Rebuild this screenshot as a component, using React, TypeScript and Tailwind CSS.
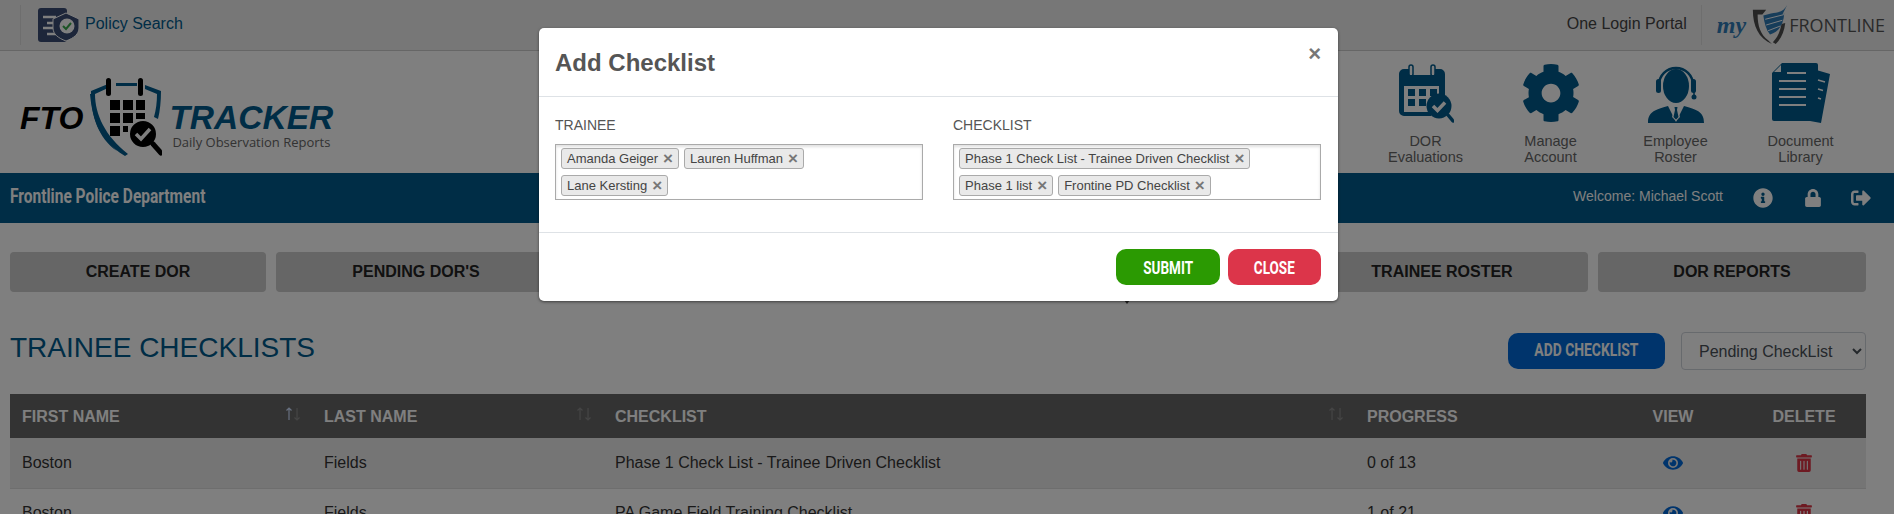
import { FaCog, FaEye, FaInfoCircle, FaLock, FaSignOutAlt, FaTrashAlt } from 'react-icons/fa';

const arial = { fontFamily: '"Liberation Sans", Arial, sans-serif' };

// the two middle buttons sit behind the modal, their labels can't be read
const navButtons = ['CREATE DOR', "PENDING DOR'S", '', '', 'TRAINEE ROSTER', 'DOR REPORTS'];

const rows = [
    { first: 'Boston', last: 'Fields', checklist: 'Phase 1 Check List - Trainee Driven Checklist', progress: '0 of 13' },
    { first: 'Boston', last: 'Fields', checklist: 'PA Game Field Training Checklist', progress: '1 of 21' },
];

function CalendarIcon() {
    return (
        <svg viewBox="0 0 56 60" className="h-[60px] w-[56px]" fill="#005a8c">
            <path d="M5 5h5v6h26V5h5a5 5 0 0 1 5 5v31h-6V22H5v26h27v4H5a5 5 0 0 1-5-5V10a5 5 0 0 1 5-5z" transform="translate(1 1)" />
            <rect x="11" y="2" width="4" height="11" rx="2" fill="none" stroke="#005a8c" strokeWidth="1.5" />
            <rect x="33" y="2" width="4" height="11" rx="2" fill="none" stroke="#005a8c" strokeWidth="1.5" />
            <path d="M10 26h7v7h-7zM21 26h7v7h-7zM32 26h7v7h-7zM10 36h7v7h-7zM21 36h7v7h-7z" />
            <circle cx="41" cy="43" r="12.5" />
            <path d="M50 52l5 6" stroke="#005a8c" strokeWidth="3.5" strokeLinecap="round" />
            <path d="M35 43l4.5 4.5 7.5-8" fill="none" stroke="#fff" strokeWidth="3.5" />
        </svg>
    );
}

function AgentIcon() {
    return (
        <svg viewBox="0 0 56 60" className="h-[60px] w-[56px]" fill="#005a8c">
            <path d="M11 22a17 17 0 0 1 34 0" fill="none" stroke="#005a8c" strokeWidth="2.5" />
            <ellipse cx="28" cy="23" rx="13" ry="17" />
            <rect x="8" y="16" width="5" height="14" rx="2.5" />
            <rect x="43" y="16" width="5" height="14" rx="2.5" />
            <path d="M46 28v6" stroke="#005a8c" strokeWidth="1.5" />
            <circle cx="46" cy="34" r="2.5" />
            <path d="M0 60c0-10 5-13 20-17l8 16 8-16c15 4 20 7 20 17z" />
            <path d="M25 43h6l-1 4 2 7-4 4-4-4 2-7z" fill="#fff" />
            <path d="M26.5 44h3l-.5 3 1.5 7-2.500 2.500-2.500-2.500 1.500-7z" />
        </svg>
    );
}

function DocumentsIcon() {
    return (
        <svg viewBox="0 0 58 60" className="h-[60px] w-[58px]" fill="#005a8c">
            <path d="M41 6l17 5-9 49-22-4h14a4 4 0 0 0 0-1z" />
            <path d="M10 0h34a2 2 0 0 1 2 2v54a2 2 0 0 1-2 2H2a2 2 0 0 1-2-2V10z" />
            <path d="M9 2v7H2z" fill="#fff" />
            <path d="M15 10h19M7 18h27M7 26h27M7 34h27M7 42h27" stroke="#fff" strokeWidth="2" />
            <path d="M46 17l7 2M46 26l5 1.500M46 35l3 1" stroke="#fff" strokeWidth="1.500" />
        </svg>
    );
}

function PolicyIcon() {
    return (
        <svg viewBox="0 0 41 34" className="h-[34px] w-[41px]">
            <path d="M3 0h23a3 3 0 0 1 3 3v28a3 3 0 0 1-3 3H3a3 3 0 0 1-3-3V3a3 3 0 0 1 3-3z" fill="#3a4c74" />
            <path d="M5 9h13M9 15h8M5 20h11M9 26h11" stroke="#fff" strokeWidth="2.500" />
            <path d="M28 5l13 6v9c0 6-5 10-13 13-8-3-13-7-13-13v-9z" fill="#3a4c74" stroke="#fff" strokeWidth="1" />
            <circle cx="29" cy="18" r="7.500" fill="#fff" />
            <path d="M25 18l3 3 5-6" fill="none" stroke="#38a84a" strokeWidth="2" />
        </svg>
    );
}

function TrackerShield() {
    return (
        <svg viewBox="0 0 73 78" className="h-[78px] w-[73px]">
            <path d="M19 6L2 13c0 24 6 48 34 65l3-2C16 58 6 36 6 16l13-6z" fill="#005a8c" />
            <path d="M1 16c2 22 8 44 27 57C12 58 5 36 4 16z" fill="#005a8c" />
            <path d="M56 7l16 6c0 10-1 20-3 28l-4-2c2-7 3-15 3-23L56 11zM27 5h21v3H27z" fill="#005a8c" />
            <rect x="17" y="0" width="5" height="18" rx="2.500" fill="#000" />
            <rect x="49" y="0" width="5" height="18" rx="2.500" fill="#000" />
            <path d="M21 22h10v10H21zM34 22h10v10H34zM47 22h9v10h-9zM21 35h10v10H21zM34 35h10v10H34zM47 35h9v6h-9zM21 48h10v10H21zM34 48h5v6h-5z" fill="#000" />
            <circle cx="54" cy="56" r="14" fill="#000" stroke="#fff" strokeWidth="2" />
            <path d="M64 66l8 9" stroke="#000" strokeWidth="5" strokeLinecap="round" />
            <path d="M47 56l5 5 9-10" fill="none" stroke="#fff" strokeWidth="3.500" />
        </svg>
    );
}

function FrontlineMark() {
    return (
        <svg viewBox="0 0 38 42" className="h-[40px] w-[38px]">
            <path d="M1 5h14l-4 5H6c0 12 3 21 11 27l4 4C7 35 1 22 1 5z" fill="#4d4d4d" />
            <path d="M25 41c6-6 9-13 10-22l-4 1c-1 7-4 14-9 19z" fill="#4d4d4d" />
            <path d="M37 0C34 6 29 8 20 9l-8 2c1 8 3 15 7 20 10-3 14-11 15-22l-2 1z" fill="#2f7ab5" />
            <path d="M14 15l20-5M15 21l17-5M17 27l13-5" stroke="#fff" strokeWidth="1" />
        </svg>
    );
}

function SortArrows({ active = false }: { active?: boolean }) {
    return (
        <svg viewBox="0 0 16 14" className="h-[14px] w-[16px]" fill="none" strokeWidth="1.200">
            <path d="M4 13V1M1.500 3.500L4 1l2.500 2.500" stroke={active ? '#cfe0ff' : '#8a8a8a'} />
            <path d="M12 1v12M9.500 10.500L12 13l2.500-2.500" stroke="#8a8a8a" />
        </svg>
    );
}

function Tag({ label }: { label: string }) {
    return (
        <span className="flex h-[21px] items-center gap-[5px] rounded-[3px] border border-[#aaa] bg-[#e9e9e9] pl-[5px] pr-[5px] text-[13px] text-[#444]">
            {label}
            <span className="text-[17px] font-bold leading-none text-[#777]">×</span>
        </span>
    );
}

function TagField({ label, rows: tagRows }: { label: string; rows: string[][] }) {
    return (
        <div className="w-[368px]">
            <div className="h-[20px] text-sm leading-[20px] text-[#555]">{label}</div>
            <div className="mt-[9px] flex h-[56px] flex-col gap-[6px] border border-[#aaa] px-[5px] pt-[3px] shadow-[inset_0_2px_3px_rgba(0,0,0,0.12)]">
                {tagRows.map((tags, i) => (
                    <div key={i} className="flex gap-[5px]">
                        {tags.map((t) => (
                            <Tag key={t} label={t} />
                        ))}
                    </div>
                ))}
            </div>
        </div>
    );
}

function Condensed({ children, className = '' }: { children: string; className?: string }) {
    return (
        <span className={`inline-block scale-x-[0.75] whitespace-nowrap font-bold ${className}`} style={{ fontFamily: 'Roboto, sans-serif' }}>
            {children}
        </span>
    );
}

export default function App() {
    return (
        <div className="relative h-[514px] w-[1894px] overflow-hidden bg-white" style={arial}>
            {/* Top bar */}
            <div className="flex h-[51px] items-center border-b border-[#ccc] bg-[#eeeeee] pl-[20px] pr-[9px]">
                <div className="h-[40px] w-px bg-[#ddd]" />
                <div className="ml-[17px] flex items-center gap-[6px]">
                    <PolicyIcon />
                    <span className="mb-[2px] text-base text-[#005a8c]">Policy Search</span>
                </div>
                <span className="mb-[2px] ml-auto text-base text-[#444]">One Login Portal</span>
                <div className="ml-[14px] h-[40px] w-px bg-[#ddd]" />
                <span className="ml-[15px] text-[24px] font-bold italic leading-none text-[#2f7ab5]" style={{ fontFamily: '"Liberation Serif", serif' }}>
                    my
                </span>
                <div className="ml-[5px]">
                    <FrontlineMark />
                </div>
                <span className="text-[18px] text-[#555]" style={{ fontFamily: '"Open Sans", sans-serif' }}>
                    FRONTLINE
                </span>
            </div>

            {/* Logo and shortcuts */}
            <div className="flex h-[122px] items-start justify-between pl-[20px] pr-[31px]">
                <div className="mt-[27px] flex items-start">
                    <span className="mt-[23px] text-[32px] font-bold italic leading-[34px] text-black">FTO</span>
                    <div className="ml-[6px]">
                        <TrackerShield />
                    </div>
                    <div className="ml-[7px] mt-[23px] flex flex-col">
                        <span className="text-[33.5px] font-bold italic leading-[34px] text-[#005a8c]">TRACKER</span>
                        <span className="ml-[3px] text-[13px] leading-[15px] text-[#666]" style={{ fontFamily: '"Open Sans", sans-serif' }}>
                            Daily Observation Reports
                        </span>
                    </div>
                </div>
                <div className="flex">
                    {[
                        { icon: <CalendarIcon />, lines: ['DOR', 'Evaluations'] },
                        { icon: <FaCog className="text-[#005a8c]" size={60} />, lines: ['Manage', 'Account'] },
                        { icon: <AgentIcon />, lines: ['Employee', 'Roster'] },
                        { icon: <DocumentsIcon />, lines: ['Document', 'Library'] },
                    ].map((item) => (
                        <div key={item.lines[0]} className="flex w-[125px] flex-col items-center pt-[12px]">
                            {item.icon}
                            <div className="mt-[10px] text-center text-[14.5px] leading-[16px] text-[#666]">
                                {item.lines.map((l) => (
                                    <div key={l}>{l}</div>
                                ))}
                            </div>
                        </div>
                    ))}
                </div>
            </div>

            {/* Blue bar */}
            <div className="flex h-[50px] items-center bg-[#005a8c] pl-[10px] pr-[23px] text-white">
                <Condensed className="mb-[2px] origin-left text-[20.7px]">Frontline Police Department</Condensed>
                <span className="mb-[4px] ml-auto text-sm">Welcome: Michael Scott</span>
                <FaInfoCircle className="mb-[1px] ml-[30px]" size={20} />
                <FaLock className="mb-[1px] ml-[31px]" size={18} />
                <FaSignOutAlt className="mb-[1px] ml-[29px]" size={20} />
            </div>

            {/* Page buttons */}
            <div className="mx-[10px] mt-[29px] grid w-[1856px] grid-cols-[256px_280px_1fr_1fr_292px_268px] gap-[10px]">
                {navButtons.map((b, i) => (
                    <div key={i} className="flex h-[40px] items-center justify-center rounded-[4px] bg-[#cccccc] text-base font-bold text-[#222]">
                        {b}
                    </div>
                ))}
            </div>

            {/* Title row */}
            <div className="mx-[10px] mt-[40px] flex h-[38px] w-[1856px] items-center">
                <h1 className="mb-[7px] text-[28px] text-[#005a8c]">TRAINEE CHECKLISTS</h1>
                <button className="ml-auto flex h-[36px] w-[157px] items-center justify-center rounded-[10px] bg-[#0069d9] text-white">
                    <Condensed className="text-[18.5px]">ADD CHECKLIST</Condensed>
                </button>
                <select className="ml-[16px] h-[38px] w-[185px] rounded-[4px] border border-[#ced4da] bg-white pl-[13px] text-base text-[#495057]">
                    <option>Pending CheckList</option>
                </select>
            </div>

            {/* Table */}
            <table className="mx-[10px] mt-[24px] w-[1856px] table-fixed border-collapse text-base">
                <colgroup>
                    <col className="w-[302px]" />
                    <col className="w-[291px]" />
                    <col className="w-[752px]" />
                    <col className="w-[249px]" />
                    <col className="w-[138px]" />
                    <col className="w-[124px]" />
                </colgroup>
                <thead>
                    <tr className="h-[44px] bg-[#666666] text-left font-bold text-white">
                        <th className="relative pl-[12px] pt-[2px]">
                            FIRST NAME
                            <span className="absolute right-[11px] top-[13px]"><SortArrows active /></span>
                        </th>
                        <th className="relative pl-[12px] pt-[2px]">
                            LAST NAME
                            <span className="absolute right-[11px] top-[13px]"><SortArrows /></span>
                        </th>
                        <th className="relative pl-[12px] pt-[2px]">
                            CHECKLIST
                            <span className="absolute right-[11px] top-[13px]"><SortArrows /></span>
                        </th>
                        <th className="pl-[12px] pt-[2px]">PROGRESS</th>
                        <th className="pt-[2px] text-center">VIEW</th>
                        <th className="pt-[2px] text-center">DELETE</th>
                    </tr>
                </thead>
                <tbody className="text-[#333]">
                    {rows.map((r, i) => (
                        <tr key={i} className={`h-[50px] border-b border-[#ddd] ${i === 0 ? 'bg-[#ebebeb]' : 'bg-white'}`}>
                            <td className="pl-[12px]">{r.first}</td>
                            <td className="pl-[12px]">{r.last}</td>
                            <td className="pl-[12px]">{r.checklist}</td>
                            <td className="pl-[12px]">{r.progress}</td>
                            <td><FaEye className="mx-auto text-[#0069d9]" size={20} /></td>
                            <td><FaTrashAlt className="mx-auto text-[#dc3545]" size={18} /></td>
                        </tr>
                    ))}
                </tbody>
            </table>

            {/* Backdrop */}
            <div className="absolute inset-0 bg-black/50" />

            {/* Caret poking out from under the modal */}
            <div className="absolute left-[1124px] top-[300px] h-0 w-0 border-x-[3px] border-t-[4px] border-x-transparent border-t-[#222]" />

            {/* Modal */}
            <div className="absolute left-[539px] top-[28px] w-[799px] rounded-[5px] bg-white shadow-[0_1px_3px_rgba(0,0,0,0.5)]">
                <div className="flex h-[69px] items-start justify-between border-b border-[#dee2e6] pl-[16px] pr-[17px]">
                    <h2 className="mt-[19px] text-2xl font-bold text-[#555]">Add Checklist</h2>
                    <span className="mt-[15px] text-[22px] font-bold leading-[22px] text-[#777]">×</span>
                </div>
                <div className="flex h-[135px] gap-[30px] px-[16px] pt-[18px]">
                    <TagField label="TRAINEE" rows={[['Amanda Geiger', 'Lauren Huffman'], ['Lane Kersting']]} />
                    <TagField label="CHECKLIST" rows={[['Phase 1 Check List - Trainee Driven Checklist'], ['Phase 1 list', 'Frontine PD Checklist']]} />
                </div>
                <div className="flex h-[69px] items-start justify-end gap-[8px] border-t border-[#dee2e6] pr-[17px] pt-[16px]">
                    <button className="flex h-[36px] w-[104px] items-center justify-center rounded-[10px] bg-[#2b9a02] text-white">
                        <Condensed className="text-[18px]">SUBMIT</Condensed>
                    </button>
                    <button className="flex h-[36px] w-[93px] items-center justify-center rounded-[10px] bg-[#dc354a] text-white">
                        <Condensed className="text-[18px]">CLOSE</Condensed>
                    </button>
                </div>
            </div>
        </div>
    );
}
